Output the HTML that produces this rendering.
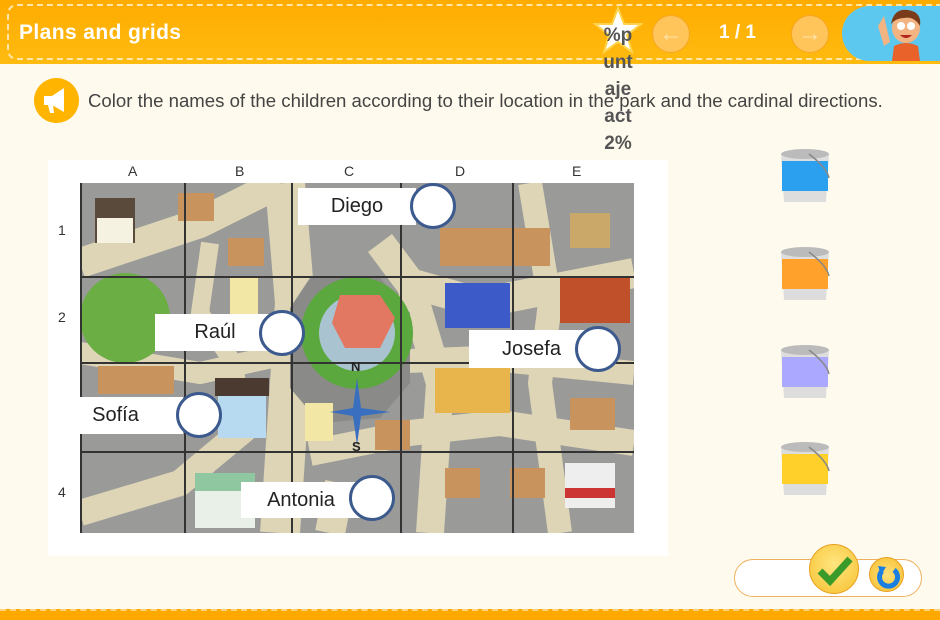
<!DOCTYPE html>
<html><head><meta charset="utf-8"><style>
*{margin:0;padding:0;box-sizing:border-box}
body{width:940px;height:620px;overflow:hidden;background:#fefaed;font-family:"Liberation Sans",sans-serif;position:relative}
.hdr{position:absolute;left:0;top:0;width:940px;height:64px;background:linear-gradient(#ffab00,#ffbb10)}
.dash{position:absolute;left:7px;top:4px;width:940px;height:56px;border:2px dashed #ffe6a8;border-right:none;border-radius:10px 0 0 10px}
.title{position:absolute;left:19px;top:21px;color:#fff;font-weight:bold;font-size:21px;letter-spacing:0.4px}
.nav{position:absolute;top:15px;width:38px;height:38px;border-radius:50%;background:#ffc45a;border:1px solid #f5a623;color:#fde3b0;font-size:24px;text-align:center;line-height:36px;font-weight:bold}
.pg{position:absolute;left:719px;top:22px;color:#fff;font-weight:bold;font-size:19px}
.kid{position:absolute;left:842px;top:6px;width:110px;height:55px;background:#5cc8ef;border-radius:28px 0 0 28px}
.star{position:absolute;left:593px;top:6px}
.pct{position:absolute;left:600px;top:22px;width:36px;color:#555;font-weight:bold;font-size:19px;line-height:27px;text-align:center}
.spk{position:absolute;left:34px;top:78px;width:45px;height:45px;border-radius:50%;background:#ffb400}
.instr{position:absolute;left:88px;top:90px;font-size:18.6px;color:#444}
.mapbox{position:absolute;left:48px;top:160px;width:620px;height:396px;background:#fff}
.col{position:absolute;top:163px;font-size:14px;color:#333}
.row{position:absolute;left:58px;font-size:14px;color:#333}
.lbl{position:absolute;background:#fff;font-size:20px;color:#222;text-align:center}
.cir{position:absolute;width:46px;height:46px;border-radius:50%;background:#fff;border:3px solid #3c5a8e}
.bucket{position:absolute;left:779px;width:52px;height:58px}
.bar{position:absolute;left:734px;top:559px;width:188px;height:38px;border:1px solid #f0b060;border-radius:19px;background:#fff}
.ok{position:absolute;left:809px;top:544px;width:50px;height:50px;border-radius:50%;background:radial-gradient(circle at 50% 40%,#ffe680,#f7c030);border:1px solid #e8a020}
.re{position:absolute;left:869px;top:557px;width:35px;height:35px;border-radius:50%;background:radial-gradient(#ffe07a,#f6be30);border:1px solid #e8a020}
.foot{position:absolute;left:0;top:609px;width:940px;height:11px;background:#ffa800;border-top:2px dashed #ffd27a}
</style></head><body>
<div class="hdr"><div class="dash"></div></div>
<div class="title">Plans and grids</div>
<svg class="star" width="50" height="50" viewBox="0 0 50 50"><polygon points="25,2 31,18 48,18 34,29 39,46 25,36 11,46 16,29 2,18 19,18" fill="#fff" stroke="#ffd34d" stroke-width="2"/></svg>
<div class="pct">%p<br>unt<br>aje<br>act<br>2%</div>
<div class="nav" style="left:652px">&#8592;</div>
<div class="pg">1 / 1</div>
<div class="nav" style="left:791px">&#8594;</div>
<div class="kid"><svg width="60" height="55" style="position:absolute;left:34px;top:0"><ellipse cx="30" cy="22" rx="14" ry="15" fill="#f2b483"/><path d="M15 18 Q18 2 32 4 Q46 6 44 20 Q38 10 28 12 Q20 12 15 18Z" fill="#7a3b1a"/><circle cx="25" cy="20" r="4" fill="#fff"/><circle cx="35" cy="20" r="4" fill="#fff"/><path d="M24 29 Q30 35 36 29Z" fill="#b3261e"/><path d="M16 55 L18 40 Q30 34 42 40 L44 55Z" fill="#e8622a"/><path d="M2 20 L8 10 L14 36 L8 40Z" fill="#f2b483"/></svg></div>
<div class="spk"><svg width="45" height="45" viewBox="0 0 45 45"><path d="M10 18 L18 18 L30 10 L30 34 L18 27 L10 27Z" fill="#fff"/><path d="M14 27 L16 35 L20 35 L19 27Z" fill="#fff"/></svg></div>
<div class="instr">Color the names of the children according to their location in the park and the cardinal directions.</div>
<div class="mapbox"></div>
<svg style="position:absolute;left:80px;top:183px" width="554" height="350" viewBox="0 0 554 350">
<rect width="554" height="350" fill="#9a9a98"/>
<g stroke="#ddd5b6" fill="none" stroke-linecap="butt">
<path d="M0 80 L120 40 L200 0" stroke-width="30"/>
<path d="M205 0 L215 120 L210 200 L200 350" stroke-width="40"/>
<path d="M0 170 L120 190 L210 170" stroke-width="22"/>
<path d="M0 330 L100 300 L160 250 L150 180" stroke-width="26"/>
<path d="M300 60 L330 100 L400 120 L554 90" stroke-width="30"/>
<path d="M330 100 L360 200 L350 350" stroke-width="28"/>
<path d="M280 180 L400 175 L554 190" stroke-width="24"/>
<path d="M230 270 L330 250 L420 240 L554 260" stroke-width="26"/>
<path d="M450 0 L470 120 L460 200 L480 350" stroke-width="24"/>
<path d="M130 60 L120 130 L150 175" stroke-width="18"/>
<path d="M260 300 L250 350" stroke-width="30"/>
</g>
<polygon points="230,95 300,95 330,130 330,200 300,235 240,240 210,205 210,125" fill="#8a8a88"/>
<circle cx="277" cy="150" r="56" fill="#5aa83e"/>
<circle cx="277" cy="150" r="38" fill="#a9c4d0"/>
<polygon points="260,112 300,112 315,135 300,165 265,165 252,140" fill="#e27762"/>
<ellipse cx="45" cy="135" rx="45" ry="45" fill="#6bae43"/>
<rect x="15" y="15" width="40" height="45" fill="#5a4a3c"/><rect x="17" y="35" width="36" height="25" fill="#f6f2e2"/>
<rect x="365" y="100" width="65" height="45" fill="#3c5ac8"/>
<rect x="480" y="95" width="70" height="45" fill="#c0502a"/>
<rect x="355" y="185" width="75" height="45" fill="#e8b54c"/>
<rect x="485" y="280" width="50" height="45" fill="#eee"/><rect x="485" y="305" width="50" height="10" fill="#c33"/>
<rect x="115" y="305" width="60" height="40" fill="#e8f0e8"/><rect x="115" y="290" width="60" height="18" fill="#8fc8a0"/>
<rect x="138" y="200" width="48" height="55" fill="#b8daf0"/><rect x="135" y="195" width="54" height="18" fill="#4a3a30"/>
<rect x="490" y="30" width="40" height="35" fill="#c9a86a"/>
<rect x="225" y="220" width="28" height="38" fill="#f2e7a5"/>
<rect x="150" y="95" width="28" height="38" fill="#f2e7a5"/>
<g fill="#c8935c"><rect x="98" y="10" width="36" height="28"/><rect x="148" y="55" width="36" height="28"/><rect x="18" y="183" width="76" height="28"/><rect x="360" y="45" width="110" height="38"/><rect x="490" y="150" width="45" height="32"/><rect x="490" y="215" width="45" height="32"/><rect x="365" y="285" width="35" height="30"/><rect x="430" y="285" width="35" height="30"/><rect x="295" y="237" width="35" height="30"/></g>
<g stroke="#333" stroke-width="2"><line x1="0" y1="94" x2="554" y2="94"/><line x1="0" y1="180" x2="554" y2="180"/><line x1="0" y1="269" x2="554" y2="269"/>
<line x1="1" y1="0" x2="1" y2="350"/><line x1="105" y1="0" x2="105" y2="350"/><line x1="212" y1="0" x2="212" y2="350"/><line x1="321" y1="0" x2="321" y2="350"/><line x1="433" y1="0" x2="433" y2="350"/></g>
<path d="M277 195 L281 225 L310 229 L281 233 L277 262 L273 233 L250 229 L273 225Z" fill="#3a6fbf"/>
<text x="271" y="188" font-size="13" font-weight="bold" fill="#222" font-family="Liberation Sans">N</text>
<text x="272" y="268" font-size="13" font-weight="bold" fill="#222" font-family="Liberation Sans">S</text>
</svg>
<div class="col" style="left:128px">A</div><div class="col" style="left:235px">B</div><div class="col" style="left:344px">C</div><div class="col" style="left:455px">D</div><div class="col" style="left:572px">E</div>
<div class="row" style="top:222px">1</div><div class="row" style="top:309px">2</div><div class="row" style="top:398px">3</div><div class="row" style="top:484px">4</div>
<div class="lbl" style="left:298px;top:188px;width:118px;height:37px;line-height:37px">Diego</div><div class="cir" style="left:410px;top:183px"></div>
<div class="lbl" style="left:155px;top:314px;width:120px;height:37px;line-height:37px">Raúl</div><div class="cir" style="left:259px;top:310px"></div>
<div class="lbl" style="left:469px;top:330px;width:125px;height:38px;line-height:38px">Josefa</div><div class="cir" style="left:575px;top:326px"></div>
<div class="lbl" style="left:48px;top:397px;width:135px;height:37px;line-height:37px">Sofía</div><div class="cir" style="left:176px;top:392px"></div>
<div class="lbl" style="left:241px;top:482px;width:120px;height:36px;line-height:36px">Antonia</div><div class="cir" style="left:349px;top:475px"></div>
<svg class="bucket" style="top:148px" viewBox="0 0 52 58"><path d="M2 6 L50 6 L47 54 L5 54Z" fill="#ddd"/><rect x="3" y="13" width="46" height="30" fill="#2aa0ef"/><ellipse cx="26" cy="6" rx="24" ry="5" fill="#bbb"/><path d="M30 6 Q48 20 50 30" stroke="#888" fill="none" stroke-width="1.5"/></svg>
<svg class="bucket" style="top:246px" viewBox="0 0 52 58"><path d="M2 6 L50 6 L47 54 L5 54Z" fill="#ddd"/><rect x="3" y="13" width="46" height="30" fill="#ffa12a"/><ellipse cx="26" cy="6" rx="24" ry="5" fill="#bbb"/><path d="M30 6 Q48 20 50 30" stroke="#888" fill="none" stroke-width="1.5"/></svg>
<svg class="bucket" style="top:344px" viewBox="0 0 52 58"><path d="M2 6 L50 6 L47 54 L5 54Z" fill="#ddd"/><rect x="3" y="13" width="46" height="30" fill="#aaa8ff"/><ellipse cx="26" cy="6" rx="24" ry="5" fill="#bbb"/><path d="M30 6 Q48 20 50 30" stroke="#888" fill="none" stroke-width="1.5"/></svg>
<svg class="bucket" style="top:441px" viewBox="0 0 52 58"><path d="M2 6 L50 6 L47 54 L5 54Z" fill="#ddd"/><rect x="3" y="13" width="46" height="30" fill="#ffd02a"/><ellipse cx="26" cy="6" rx="24" ry="5" fill="#bbb"/><path d="M30 6 Q48 20 50 30" stroke="#888" fill="none" stroke-width="1.5"/></svg>
<div class="bar"></div>
<div class="ok"><svg width="50" height="50"><path d="M10 26 L20 36 L40 14" stroke="#3a9a2a" stroke-width="7" fill="none"/></svg></div>
<div class="re"><svg width="35" height="35"><path d="M24 12 A9 9 0 1 1 12 13" stroke="#1a7fe0" stroke-width="5" fill="none"/><path d="M8 8 L16 9 L11 17Z" fill="#1a7fe0"/></svg></div>
<div class="foot"></div>
</body></html>
